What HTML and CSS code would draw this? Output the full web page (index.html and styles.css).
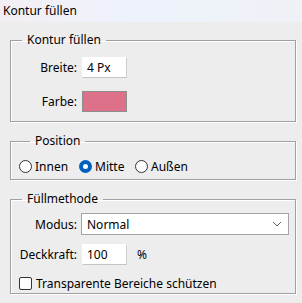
FILE: index.html
```
<!DOCTYPE html>
<html lang="de">
<head>
    <title>Kontur füllen</title>
    <link rel="stylesheet" href="styles.css">
</head>
<body>

    <div class="titlebar">Kontur füllen</div>

    <div class="dialog">
        <fieldset class="group group-stroke">
            <legend>Kontur füllen</legend>
            <div class="row">
                <label class="lbl" for="breite">Breite:</label>
                <input type="text" id="breite" class="field small" value="4 Px">
            </div>
            <div class="row row-color">
                <span class="lbl">Farbe:</span>
                <span class="swatch"></span>
            </div>
        </fieldset>

        <fieldset class="group group-pos">
            <legend>Position</legend>
            <div class="radios">
                <span class="opt"><span class="radio"></span>Innen</span>
                <span class="opt"><span class="radio checked"></span>Mitte</span>
                <span class="opt"><span class="radio"></span>Außen</span>
            </div>
        </fieldset>

        <fieldset class="group group-fill">
            <legend>Füllmethode</legend>
            <div class="row">
                <span class="lbl">Modus:</span>
                <div class="select">
                    <span>Normal</span>
                    <svg width="10" height="6" viewBox="0 0 10 6"><path d="M1 1 L5 5 L9 1" fill="none" stroke="#606060" stroke-width="1"/></svg>
                </div>
            </div>
            <div class="row row-opacity">
                <label class="lbl" for="deckkraft">Deckkraft:</label>
                <input type="text" id="deckkraft" class="field small" value="100">
                <span class="unit">%</span>
            </div>
            <div class="check-row">
                <span class="checkbox"></span>Transparente Bereiche schützen
            </div>
        </fieldset>
    </div>

</body>
</html>
```

FILE: styles.css
```
body {
    margin: 0;
    background-color: #ededed;
    font-family: "Noto Sans", "Open Sans", sans-serif;
    font-size: 12px;
    color: #000;
}

.titlebar {
    height: 22px;
    line-height: 21px;
    padding-left: 3px;
    background: linear-gradient(to right, #f3eef4, #eef2fb 40%, #eef2f7);
}

.dialog {
    padding: 10px 6px 0 10px;
}

.group {
    margin: 0 0 11px 0;
    padding: 0;
    min-width: 0;
    border: 1px solid #a0a0a0;
    box-shadow: inset 1px 1px 0 #fff, 1px 1px 0 #fff;
}

legend {
    margin-left: 11px;
    padding: 0 5px;
    line-height: 16px;
}

.row {
    display: flex;
    align-items: center;
}

.lbl {
    width: 66px;
    text-align: right;
    margin-right: 4px;
}

.field {
    font: inherit;
    height: 21px;
    box-sizing: border-box;
    border: 1px solid #fff;
    border-right-color: #d0d0d0;
    border-bottom-color: #c4c4c4;
    background: #fff;
    padding: 0 4px;
    margin: 0 0 0 1px;
    outline: none;
}

.small {
    width: 45px;
}

/* group 1 */
.group-stroke {
    padding: 9px 0 9px 0;
}

.row-color {
    margin-top: 13px;
}

.swatch {
    width: 45px;
    height: 21px;
    box-sizing: border-box;
    margin-left: 1px;
    border: 1px solid #8e8e8e;
    background: #dc7189;
}

/* group 2 */
.group-pos {
    padding: 9px 0 5px 8px;
}

.radios {
    display: grid;
    grid-template-columns: 60px 56px auto;
    height: 16px;
    align-items: center;
}

.opt {
    display: flex;
    align-items: center;
}

.radio {
    width: 13px;
    height: 13px;
    box-sizing: border-box;
    border: 1px solid #333;
    border-radius: 50%;
    background: #fff;
    margin-right: 3px;
}

.radio.checked {
    border: 4px solid #0060c0;
}

/* group 3 */
.group-fill {
    padding: 6px 0 2px 0;
}

.select {
    width: 208px;
    height: 22px;
    box-sizing: border-box;
    border: 1px solid #a4a4a4;
    background: #fff;
    display: flex;
    align-items: center;
    justify-content: space-between;
    padding: 0 6px 0 5px;
}

.row-opacity {
    margin-top: 9px;
}

.unit {
    margin-left: 10px;
}

.check-row {
    display: flex;
    align-items: center;
    height: 16px;
    margin-top: 10px;
    padding-left: 8px;
}

.checkbox {
    width: 13px;
    height: 13px;
    box-sizing: border-box;
    border: 1px solid #333;
    border-radius: 2px;
    background: #fff;
    margin-right: 4px;
}
```
